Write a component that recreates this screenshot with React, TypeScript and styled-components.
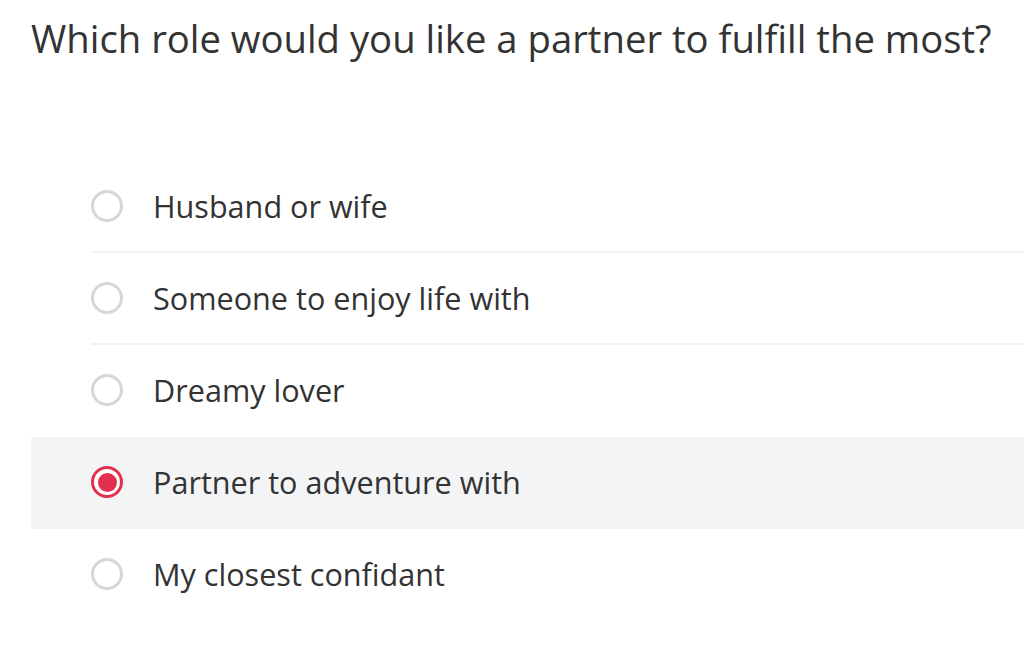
import { useState } from 'react';
import styled, { createGlobalStyle } from 'styled-components';

const GlobalStyle = createGlobalStyle`
  html, body {
    margin: 0;
    padding: 0;
    background: #ffffff;
  }
  body {
    font-family: 'Open Sans', 'Noto Sans', sans-serif;
    color: #333333;
    overflow: hidden;
  }
`;

const Page = styled.div`
  width: 1024px;
  height: 661px;
  padding: 12px 0 0 31px;
  box-sizing: border-box;
`;

const Question = styled.h1`
  margin: 0;
  font-size: 38.25px;
  font-weight: 400;
  line-height: 52px;
  color: #333333;
`;

const Options = styled.ul`
  list-style: none;
  margin: 97px 0 0;
  padding: 0;
`;

const Option = styled.li<{ $selected: boolean }>`
  display: flex;
  padding-left: 60px;
  background: ${(p) => (p.$selected ? '#f3f4f6' : 'transparent')};
  cursor: pointer;
`;

const OptionInner = styled.label<{ $divider: boolean }>`
  flex: 1;
  display: flex;
  align-items: center;
  gap: 30px;
  height: 90px;
  border-bottom: 2px solid ${(p) => (p.$divider ? '#f1f1f1' : 'transparent')};
  cursor: pointer;
`;

const Radio = styled.span<{ $checked: boolean }>`
  flex: none;
  width: 32px;
  height: 32px;
  box-sizing: border-box;
  border-radius: 50%;
  border: 3px solid ${(p) => (p.$checked ? '#e3304f' : '#d6d6d6')};
  display: flex;
  align-items: center;
  justify-content: center;
  background: #ffffff;

  &::after {
    content: '';
    width: 19px;
    height: 19px;
    border-radius: 50%;
    background: #e3304f;
    display: ${(p) => (p.$checked ? 'block' : 'none')};
  }
`;

const Label = styled.span`
  font-size: 30.6px;
  color: #333333;
`;

const choices = [
  'Husband or wife',
  'Someone to enjoy life with',
  'Dreamy lover',
  'Partner to adventure with',
  'My closest confidant',
];

export default function App() {
  const [selected, setSelected] = useState(3);

  return (
    <>
      <GlobalStyle />
      <Page>
        <Question>Which role would you like a partner to fulfill the most?</Question>
        <Options>
          {choices.map((choice, i) => {
            const isLast = i === choices.length - 1;
            const divider = !isLast && i !== selected && i + 1 !== selected;
            return (
              <Option key={choice} $selected={i === selected} onClick={() => setSelected(i)}>
                <OptionInner $divider={divider}>
                  <Radio $checked={i === selected} />
                  <Label>{choice}</Label>
                </OptionInner>
              </Option>
            );
          })}
        </Options>
      </Page>
    </>
  );
}
